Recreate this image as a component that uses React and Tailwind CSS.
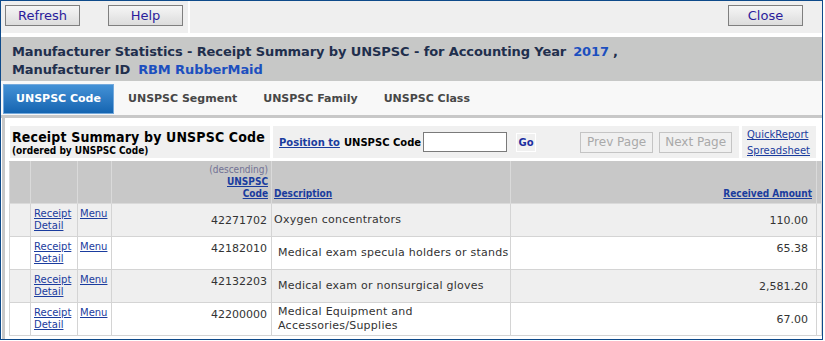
import React from "react";

const rows = [
  { code: "42271702", desc: ["Oxygen concentrators"], amt: "110.00", bg: "bg-[#efefef]", codeTop: false, amtTop: false, dpl: "pl-[2px]" },
  { code: "42182010", desc: ["Medical exam specula holders or stands"], amt: "65.38", bg: "bg-white", codeTop: true, amtTop: true, dpl: "pl-[6px]" },
  { code: "42132203", desc: ["Medical exam or nonsurgical gloves"], amt: "2,581.20", bg: "bg-[#efefef]", codeTop: true, amtTop: false, dpl: "pl-[6px]" },
  { code: "42200000", desc: ["Medical Equipment and", "Accessories/Supplies"], amt: "67.00", bg: "bg-white", codeTop: true, amtTop: false, dpl: "pl-[6px]" },
];

function Btn({ children }) {
  return (
    <div className="w-[75px] h-[21px] border border-[#7f7f7f] bg-gradient-to-b from-[#f6f6f6] to-[#dcdcdc] flex items-center justify-center text-[13px] text-[#2b1c9c] leading-none">
      {children}
    </div>
  );
}

const cond = "font-['DejaVu_Sans_Condensed','DejaVu_Sans',sans-serif]";

export default function App() {
  return (
    <div className="w-[823px] h-[340px] border border-[#0e4a8a] bg-white font-['DejaVu_Sans',Verdana,sans-serif] text-[#333] overflow-hidden flex flex-col">
      {/* toolbar */}
      <div className="flex h-[32px] shrink-0">
        <div className="w-[187px] bg-[#efefef] flex items-start pt-[4px] pl-[4px] gap-[28px]">
          <Btn>Refresh</Btn>
          <Btn>Help</Btn>
        </div>
        <div className="w-[2px] bg-white" />
        <div className="flex-1 bg-[#efefef] flex items-start justify-end pt-[4px] pr-[19px]">
          <Btn>Close</Btn>
        </div>
      </div>
      <div className="h-[4px] shrink-0 bg-white" />
      {/* title band */}
      <div className="h-[44px] shrink-0 bg-[#c7c8c7] pl-[11px] pt-[6px] text-[13px] font-bold leading-[18px] text-[#1f2f4d] whitespace-nowrap tracking-[-0.1px]">
        <div>
          Manufacturer Statistics - Receipt Summary by UNSPSC - for Accounting Year
          <span className="text-[#1c4fbf] px-[4px] ml-[3px]">2017</span>,
        </div>
        <div>
          Manufacturer ID
          <span className="text-[#1c4fbf] px-[4px] ml-[4px]">RBM RubberMaid</span>
        </div>
      </div>
      {/* tabs */}
      <div className="h-[34px] shrink-0 bg-[#f8f8f8] flex items-start pt-[3px] pl-[2px] text-[11px] font-bold whitespace-nowrap">
        <div className="h-[30px] w-[111px] flex items-center justify-center border border-[#74a9dc] bg-gradient-to-b from-[#4391d6] to-[#1465b1] text-white">
          UNSPSC Code
        </div>
        <div className="h-[30px] px-[13px] flex items-center text-[#474747] ml-[1px]">UNSPSC Segment</div>
        <div className="h-[30px] px-[13px] flex items-center text-[#474747]">UNSPSC Family</div>
        <div className="h-[30px] px-[13px] flex items-center text-[#474747]">UNSPSC Class</div>
      </div>
      {/* panel */}
      <div className="flex-1 flex border-t-[3px] border-[#c8c8c8]">
        <div className="w-[1px] bg-white" />
        <div className="w-[4px] bg-[#c8c8c8]" />
        <div className="flex-1 bg-white pl-[4px] pt-[8px] flex flex-col">
          {/* header boxes */}
          <div className="flex h-[32px] gap-[3px] pr-[6px] pl-[1px] whitespace-nowrap">
            <div className={`w-[260px] bg-[#f0f0f0] pl-[2px] pt-[2px] text-black font-bold ${cond}`}>
              <div className="text-[14px] leading-[18px] tracking-[0.15px]">Receipt Summary by UNSPSC Code</div>
              <div className="text-[10px] leading-[10px]">(ordered by UNSPSC Code)</div>
            </div>
            <div className="w-[466px] bg-[#f0f0f0] flex items-center pl-[6px] text-[10px] font-bold">
              <span className="text-[#1a3c9e] underline">Position to</span>
              <span className="ml-[4px] text-black">UNSPSC Code</span>
              <div className="ml-[2px] w-[84px] h-[20px] border border-[#7a7a7a] bg-white" />
              <div className="ml-[9px] w-[20px] h-[19px] border border-white flex items-center justify-center text-[#1a2ea0]">Go</div>
              <div className="ml-[44px] w-[73px] h-[21px] border border-[#c4c4c4] flex items-center justify-center text-[12px] font-normal text-[#a9a9a9]">Prev Page</div>
              <div className="ml-[6px] w-[73px] h-[21px] border border-[#c4c4c4] flex items-center justify-center text-[12px] font-normal text-[#a9a9a9]">Next Page</div>
            </div>
            <div className="flex-1 bg-[#f0f0f0] pl-[5px] pt-[1px] text-[10px] leading-[16px] text-[#1a3c9e] underline">
              <div>QuickReport</div>
              <div>Spreadsheet</div>
            </div>
          </div>
          {/* table */}
          <table className="mt-[3px] w-[812px] table-fixed">
            <colgroup>
              <col className="w-[21px]" />
              <col className="w-[47px]" />
              <col className="w-[34px]" />
              <col className="w-[160px]" />
              <col className="w-[239px]" />
              <col className="w-[306px]" />
              <col className="w-[5px]" />
            </colgroup>
            <thead>
              <tr className="h-[42px] bg-[#c8c8c8] text-[10px] leading-[12px]">
                <th className="border border-[#dadada] border-t-[#c8c8c8]" />
                <th className="border border-[#dadada] border-t-[#c8c8c8]" />
                <th className="border border-[#dadada] border-t-[#c8c8c8]" />
                <th className={`border border-[#dadada] border-t-[#c8c8c8] text-right align-bottom pr-[3px] pb-[3px] ${cond}`}>
                  <div className="font-normal text-[#727294]">(descending)</div>
                  <div className="text-[#1a3c9e] underline font-bold">UNSPSC</div>
                  <div className="text-[#1a3c9e] underline font-bold">Code</div>
                </th>
                <th className={`border border-[#dadada] border-t-[#c8c8c8] text-left align-bottom pl-[2px] pb-[3px] text-[#1a3c9e] underline font-bold ${cond}`}>
                  Description
                </th>
                <th className={`border border-[#dadada] border-t-[#c8c8c8] text-right align-bottom pr-[4px] pb-[3px] text-[#1a3c9e] underline font-bold ${cond}`}>
                  Received Amount
                </th>
                <th className="border border-[#dadada] border-t-[#c8c8c8]" />
              </tr>
            </thead>
            <tbody>
              {rows.map((r) => (
                <tr key={r.code} className={`h-[33px] ${r.bg}`}>
                  <td className="border border-[#d4d4d4]" />
                  <td className="border border-[#d4d4d4] align-top pt-[4px] pl-[3px] text-[10px] leading-[12px]">
                    <div className="text-[#1a3c9e] underline">Receipt</div>
                    <div className="text-[#1a3c9e] underline">Detail</div>
                  </td>
                  <td className="border border-[#d4d4d4] align-top pt-[4px] pl-[2px] text-[10px] leading-[12px]">
                    <div className="text-[#1a3c9e] underline">Menu</div>
                  </td>
                  <td className={`border border-[#d4d4d4] text-right pr-[4px] text-[11px] leading-[13px] ${r.codeTop ? "align-top pt-[5px]" : "align-middle"}`}>
                    {r.code}
                  </td>
                  <td className={`border border-[#d4d4d4] align-middle ${r.dpl} text-[11px] leading-[14px] tracking-[0.25px]`}>
                    {r.desc.map((d) => (
                      <div key={d}>{d}</div>
                    ))}
                  </td>
                  <td className={`border border-[#d4d4d4] text-right pr-[8px] text-[11px] leading-[13px] ${r.amtTop ? "align-top pt-[5px]" : "align-middle"}`}>
                    {r.amt}
                  </td>
                  <td className="border border-[#d4d4d4]" />
                </tr>
              ))}
            </tbody>
          </table>
        </div>
      </div>
    </div>
  );
}
